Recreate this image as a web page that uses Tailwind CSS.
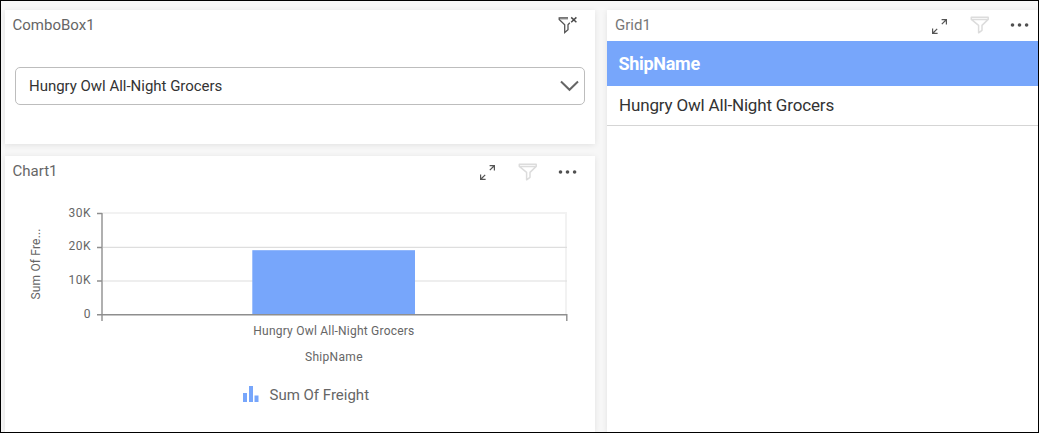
<!DOCTYPE html>
<html lang="en">
<head>
<meta charset="utf-8">
<title>Dashboard</title>
<script src="https://cdn.jsdelivr.net/npm/@tailwindcss/browser@4"></script>
</head>
<body class="w-[1039px] h-[433px] overflow-hidden font-[Roboto,sans-serif]">
<svg class="hidden">
  <symbol id="expand" viewBox="0 0 18 18"><path d="M11.6 2.6H16.4V7.4M16 3L11.8 7.2M2.6 11.6V16.4H7.6M3 16L7.2 11.8" fill="none" stroke="#555" stroke-width="1.2"/></symbol>
  <symbol id="funnel" viewBox="0 0 20 18"><path d="M1.3 1.3H18.2V3.4L12 9.4V14.3L8.6 16.8V9.4L1.3 3.4ZM1.6 3.4H18" fill="none" stroke="#dcdcdc" stroke-width="1.5" stroke-linejoin="round"/></symbol>
  <symbol id="dots" viewBox="0 0 20 6"><g fill="#505050"><circle cx="2.5" cy="3" r="1.8"/><circle cx="9.5" cy="3" r="1.8"/><circle cx="16.6" cy="3" r="1.8"/></g></symbol>
</svg>
<div class="flex gap-3 w-full h-full border border-black bg-[#f7f7f7] pl-1 pt-[9px]">
  <div class="flex flex-col gap-3 w-[590px] shrink-0">
    <section class="h-[134px] bg-white shadow-[0_1px_6px_rgba(0,0,0,0.09)]">
      <header class="flex justify-between h-[30px] pl-[7.5px] pr-[17px] pt-[5px]">
        <h2 class="text-[15px] leading-5 text-[#666]">ComboBox1</h2>
        <svg class="w-5 h-5" viewBox="0 0 20 20"><path d="M1.2 2.4H10V4.8H2.4Z" fill="#bbb"/><path d="M10 2.8H1.2V4.4L6.7 9.8V17.6L10 14.8V9.8L11.8 7.8" fill="none" stroke="#555" stroke-width="1.3"/><path d="M13.2 2.4L18.4 7.2M18.4 2.4L13.2 7.2" stroke="#4a4a4a" stroke-width="1.5"/></svg>
      </header>
      <div class="flex items-center justify-between mt-[27px] mx-2.5 h-[38px] rounded-[5px] border border-[#bdbdbd] pl-[13px] pr-1">
        <span class="text-[15px] leading-5 text-[#333] tracking-[-0.02px]">Hungry Owl All-Night Grocers</span>
        <svg class="w-5 h-3" viewBox="0 0 20 12"><path d="M1 1.5L9.5 9.8L18 1.5" fill="none" stroke="#666" stroke-width="2"/></svg>
      </div>
    </section>
    <section class="flex-1 flex flex-col bg-white shadow-[0_1px_6px_rgba(0,0,0,0.09)]">
      <header class="flex justify-between h-[30px] pl-[7.5px] pr-[17px] pt-[5px]">
        <h2 class="text-[15px] leading-5 text-[#666]">Chart1</h2>
        <div class="flex">
          <svg class="w-[18px] h-[18px] mt-[2px]"><use href="#expand"/></svg>
          <svg class="w-5 h-[18px] ml-[22px] mt-[2px]"><use href="#funnel"/></svg>
          <svg class="w-5 h-1.5 ml-5 mt-[8px]"><use href="#dots"/></svg>
        </div>
      </header>
      <svg class="w-[590px] h-[184px] text-[12px]" viewBox="5 186 590 184" fill="#666">
        <path d="M102 213H567M566 213V314" stroke="#f2f2f2" stroke-width="2" fill="none"/>
        <path d="M102 247.3H567M102 281H567" stroke="#dedede" stroke-width="1.2"/>
        <rect x="252.3" y="250.2" width="162.7" height="64.3" fill="#77a6fb"/>
        <path d="M102 213V321" stroke="#b0b0b0" stroke-width="2"/>
        <path d="M97 213.5H102M97 247.5H102M97 281H102M97 314.7H567M566.8 314V321" stroke="#8e8e8e" stroke-width="1.4" fill="none"/>
        <g text-anchor="end">
          <text x="90.6" y="217" textLength="22">30K</text>
          <text x="90.6" y="250" textLength="22">20K</text>
          <text x="90.6" y="284" textLength="22">10K</text>
          <text x="90.6" y="318">0</text>
        </g>
        <text transform="translate(40 299.5) rotate(-90)" textLength="71">Sum Of Fre...</text>
        <text x="253.3" y="335" textLength="161">Hungry Owl All-Night Grocers</text>
        <text x="305" y="361" textLength="57.5">ShipName</text>
      </svg>
      <div class="flex items-center h-[50px] pl-[238px] gap-[10.5px]">
        <svg class="w-4 h-4 -mt-[3px]" viewBox="0 0 16 16" fill="#77a6fb"><path d="M0 7h4v9H0zM6 0h4v16H6zM11.5 9.5h4V16h-4z"/></svg>
        <span class="text-[15px] leading-5 text-[#666]">Sum Of Freight</span>
      </div>
    </section>
  </div>
  <section class="flex-1 bg-white shadow-[0_1px_6px_rgba(0,0,0,0.09)]">
    <header class="flex justify-between h-[31px] pl-2 pr-[8px] pt-[5px]">
      <h2 class="text-[15px] leading-5 text-[#777]">Grid1</h2>
      <div class="flex">
        <svg class="w-[18px] h-[18px] mt-[2px]"><use href="#expand"/></svg>
        <svg class="w-5 h-[18px] ml-[22px] mt-[1px]"><use href="#funnel"/></svg>
        <svg class="w-5 h-1.5 ml-5 mt-[7px]"><use href="#dots"/></svg>
      </div>
    </header>
    <div class="flex items-center h-[45px] bg-[#77a6fb] text-white font-bold text-[18px] pl-[11.5px] pb-px tracking-[-0.3px]">ShipName</div>
    <div class="flex items-center h-10 border-b border-[#d5d5d5] text-[#333] text-[17px] pl-3 tracking-[-0.17px]">Hungry Owl All-Night Grocers</div>
  </section>
</div>
</body>
</html>
